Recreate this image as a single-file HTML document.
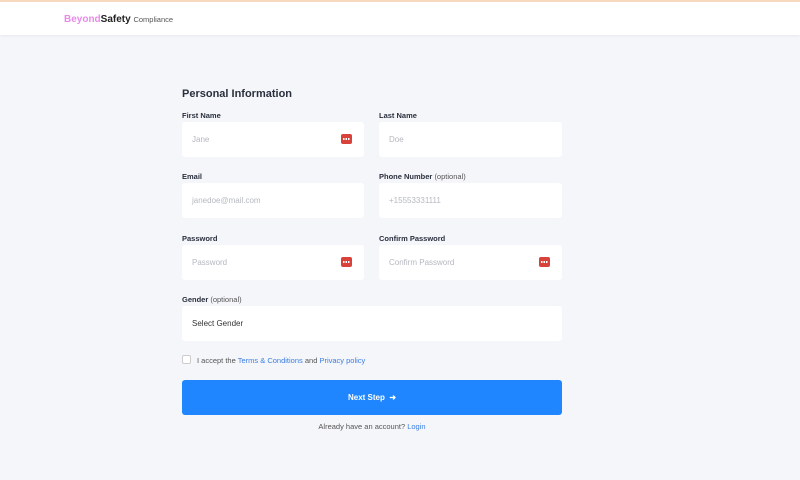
<!DOCTYPE html>
<html><head><style>
*{box-sizing:border-box;margin:0;padding:0}
body{width:800px;height:480px;background:#f5f6fa;font-family:"Liberation Sans",sans-serif;position:relative;overflow:hidden}
.hdr{position:absolute;left:0;top:0;width:800px;height:35px;background:#fff;border-top:2px solid #f6d9bf;box-shadow:0 1px 3px rgba(0,0,0,.06)}
.logo{position:absolute;left:64px;top:12px;font-size:10px;white-space:nowrap}
.logo .b{color:#e88be8;font-weight:bold}.logo .s{color:#222;font-weight:bold}.logo .c{color:#555;font-size:7.5px}
.h{position:absolute;left:182px;top:88px;font-size:11px;font-weight:bold;color:#2a2f3d}
.l{position:absolute;font-size:7.5px;font-weight:bold;color:#2a2f3d}
.l span{font-weight:normal;color:#555}
.i{position:absolute;height:35px;background:#fff;border-radius:3px;font-size:8px;color:#b5b8c0;padding:0 10px;line-height:35px}
.k{position:absolute;right:12px;top:12px;width:11px;height:10px;background:#d9413b;border-radius:2px}
.k:after{content:"";position:absolute;left:2px;top:4px;width:7px;height:1.5px;background:repeating-linear-gradient(90deg,#fff 0 1.5px,transparent 1.5px 2.5px)}
</style></head><body>
<div class="hdr"><div class="logo"><span class="b">Beyond</span><span class="s">Safety</span> <span class="c">Compliance</span></div></div>
<div class="h">Personal Information</div>
<div class="l" style="left:182px;top:111px">First Name</div>
<div class="l" style="left:379px;top:111px">Last Name</div>
<div class="i" style="left:182px;top:122px;width:182px">Jane<div class="k"></div></div>
<div class="i" style="left:379px;top:122px;width:183px">Doe</div>
<div class="l" style="left:182px;top:172px">Email</div>
<div class="l" style="left:379px;top:172px">Phone Number <span>(optional)</span></div>
<div class="i" style="left:182px;top:183px;width:182px">janedoe@mail.com</div>
<div class="i" style="left:379px;top:183px;width:183px">+15553331111</div>
<div class="l" style="left:182px;top:234px">Password</div>
<div class="l" style="left:379px;top:234px">Confirm Password</div>
<div class="i" style="left:182px;top:245px;width:182px">Password<div class="k"></div></div>
<div class="i" style="left:379px;top:245px;width:183px">Confirm Password<div class="k"></div></div>
<div class="l" style="left:182px;top:295px">Gender <span>(optional)</span></div>
<div class="i" style="left:182px;top:306px;width:380px;color:#333">Select Gender</div>
<div style="position:absolute;left:182px;top:355px;width:9px;height:9px;border:1px solid #ccc;border-radius:2px;background:#fff"></div>
<div style="position:absolute;left:197px;top:356px;font-size:7.5px;color:#555">I accept the <span style="color:#3b7de0">Terms &amp; Conditions</span> and <span style="color:#3b7de0">Privacy policy</span></div>
<div style="position:absolute;left:182px;top:380px;width:380px;height:35px;background:#1f86ff;border-radius:3px;color:#fff;font-size:8px;font-weight:bold;text-align:center;line-height:35px">Next Step &nbsp;➜</div>
<div style="position:absolute;left:182px;width:380px;text-align:center;top:422px;font-size:7.5px;color:#555">Already have an account? <span style="color:#3b7de0">Login</span></div>
</body></html>
